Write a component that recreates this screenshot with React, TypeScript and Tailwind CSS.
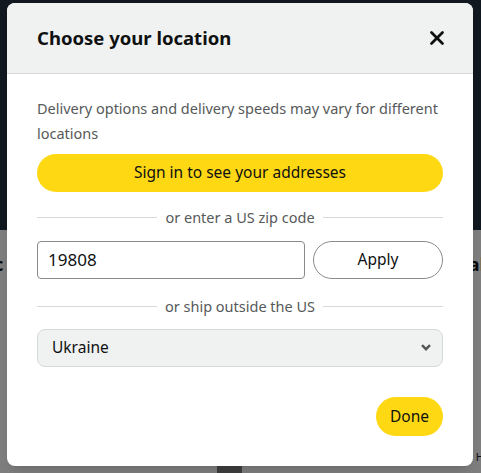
import { X } from "lucide-react";

const Divider = ({ label }: { label: string }) => (
  <div className="flex items-center gap-2">
    <div className="h-px flex-1 bg-[#d5d9d9]" />
    <span className="text-[14.5px] leading-5 text-[#565959]">{label}</span>
    <div className="h-px flex-1 bg-[#d5d9d9]" />
  </div>
);

export default function App() {
  return (
    <div
      className="relative h-[473px] w-full overflow-hidden bg-[#7f7f7f]"
      style={{ fontFamily: '"Noto Sans", "Open Sans", sans-serif' }}
    >
      {/* page behind the overlay */}
      <div className="h-[230px] bg-[#111820]" />
      <div className="flex justify-between px-0 pt-[22px] text-[18px] font-bold leading-6 text-[#0a0a0a]">
        <span className="-ml-[6px]">c</span>
        <span className="-mr-[4px]">al</span>
      </div>
      <div className="absolute bottom-0 left-[217px] h-[7px] w-[25px] bg-[#3f3f3f]" />
      <span className="absolute bottom-[8px] right-[-3px] text-[11px] text-[#111]">H</span>

      {/* modal */}
      <div className="absolute left-[7px] top-[3px] flex h-[463px] w-[466px] flex-col overflow-hidden rounded-lg bg-white shadow-lg">
        <div className="flex h-[71px] items-center justify-between border-b border-[#d5d9d9] bg-[#f0f2f2] pl-[30px] pr-[25px]">
          <h2 className="text-[18.5px] font-bold leading-6 text-[#0f1111]">Choose your location</h2>
          <X className="h-[22px] w-[22px] text-[#0f1111]" strokeWidth={3} />
        </div>

        <div className="flex flex-1 flex-col px-[30px] pt-[22px]">
          <p className="text-[14.5px] leading-[25px] text-[#565959]">
            Delivery options and delivery speeds may vary for different locations
          </p>

          <button
            type="button"
            className="mt-[8px] h-[38px] w-full rounded-full bg-[#ffd814] text-[15.5px] text-[#0f1111]"
          >
            Sign in to see your addresses
          </button>

          <div className="mt-[15px]">
            <Divider label="or enter a US zip code" />
          </div>

          <div className="mt-[14px] flex gap-2">
            <div className="flex h-[38px] flex-1 items-center rounded-[4px] border border-[#888c8c] px-[10px] text-[17px] text-[#0f1111]">
              19808
            </div>
            <button
              type="button"
              className="h-[38px] w-[130px] rounded-full border border-[#888c8c] bg-white text-[15.5px] text-[#0f1111]"
            >
              Apply
            </button>
          </div>

          <div className="mt-[17px]">
            <Divider label="or ship outside the US" />
          </div>

          <div className="mt-[13px] flex h-[38px] items-center justify-between rounded-lg border border-[#d5d9d9] bg-[#f0f2f2] pl-[14px] pr-[11px]">
            <span className="text-[15.5px] text-[#0f1111]">Ukraine</span>
            <svg width="10" height="7" viewBox="0 0 10 7" className="mb-[2px] text-[#555]">
              <polyline
                points="1,1.2 5,5.2 9,1.2"
                fill="none"
                stroke="currentColor"
                strokeWidth="2.4"
              />
            </svg>
          </div>

          <div className="mt-[30px] flex justify-end">
            <button
              type="button"
              className="h-[39px] w-[67px] rounded-full bg-[#ffd814] text-[15.5px] text-[#0f1111]"
            >
              Done
            </button>
          </div>
        </div>
      </div>
    </div>
  );
}
